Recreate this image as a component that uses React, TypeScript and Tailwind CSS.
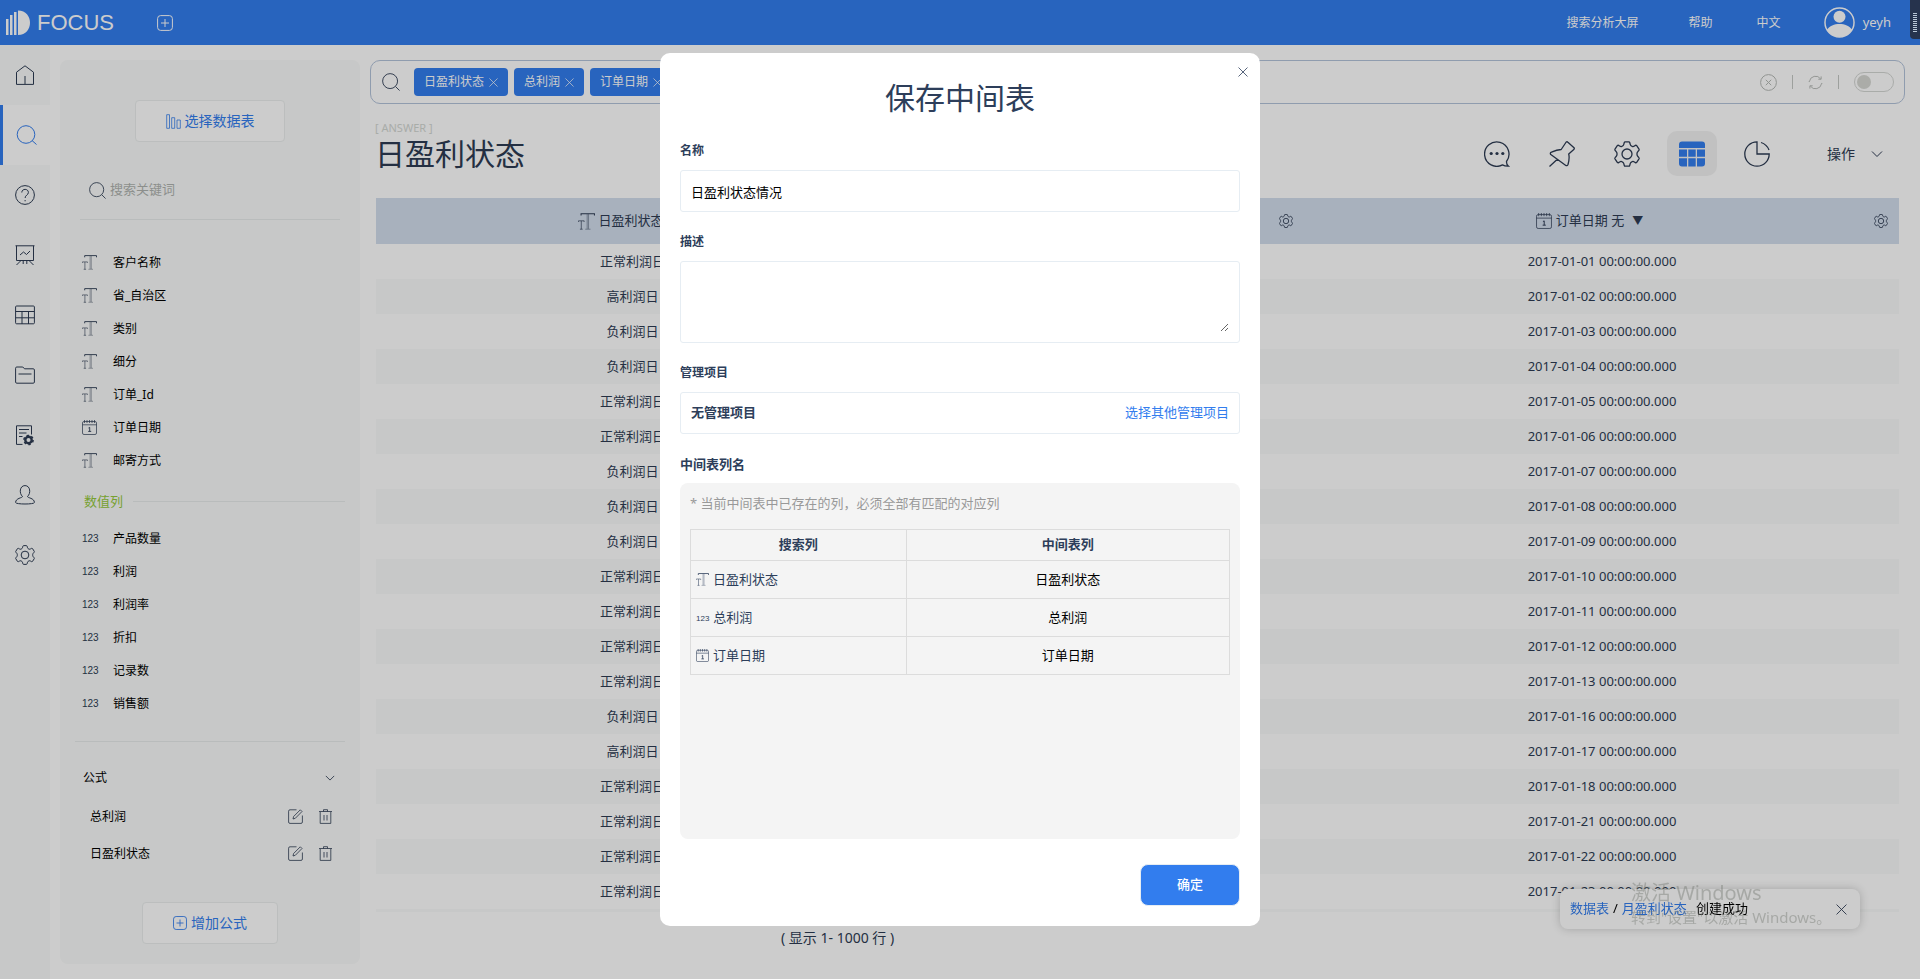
import type { ReactNode } from 'react';

type FieldType = 'text' | 'date' | 'number';

const textFields: { name: string; type: FieldType }[] = [
    { name: '客户名称', type: 'text' },
    { name: '省_自治区', type: 'text' },
    { name: '类别', type: 'text' },
    { name: '细分', type: 'text' },
    { name: '订单_Id', type: 'text' },
    { name: '订单日期', type: 'date' },
    { name: '邮寄方式', type: 'text' },
];

const numberFields = ['产品数量', '利润', '利润率', '折扣', '记录数', '销售额'];
const formulas = ['总利润', '日盈利状态'];
const keywords = ['日盈利状态', '总利润', '订单日期'];

const rows = [
    ['正常利润日', '2017-01-01'],
    ['高利润日', '2017-01-02'],
    ['负利润日', '2017-01-03'],
    ['负利润日', '2017-01-04'],
    ['正常利润日', '2017-01-05'],
    ['正常利润日', '2017-01-06'],
    ['负利润日', '2017-01-07'],
    ['负利润日', '2017-01-08'],
    ['负利润日', '2017-01-09'],
    ['正常利润日', '2017-01-10'],
    ['正常利润日', '2017-01-11'],
    ['正常利润日', '2017-01-12'],
    ['正常利润日', '2017-01-13'],
    ['负利润日', '2017-01-16'],
    ['高利润日', '2017-01-17'],
    ['正常利润日', '2017-01-18'],
    ['正常利润日', '2017-01-21'],
    ['正常利润日', '2017-01-22'],
    ['正常利润日', '2017-01-23'],
];

const mappedColumns: { name: string; type: FieldType }[] = [
    { name: '日盈利状态', type: 'text' },
    { name: '总利润', type: 'number' },
    { name: '订单日期', type: 'date' },
];

function Icon({ box = 20, className, children }: { box?: number; className: string; children: ReactNode }) {
    return (
        <svg viewBox={`0 0 ${box} ${box}`} className={`shrink-0 ${className}`} fill="none" stroke="currentColor" aria-hidden="true">
            {children}
        </svg>
    );
}

function SearchIcon({ className }: { className: string }) {
    return (
        <Icon className={className}>
            <circle cx="9" cy="9" r="8.3" />
            <path d="M15 15l4.5 4.5" />
        </Icon>
    );
}

function GearIcon({ className, strokeWidth = 1 }: { className: string; strokeWidth?: number }) {
    return (
        <Icon box={26} className={className}>
            <g strokeWidth={strokeWidth} strokeLinejoin="round">
                <path d="M9.7 3.6 10.3 1.5Q10.5.8 11.2.8H14.8Q15.5.8 15.7 1.5L16.3 3.6Q16.7 4.8 17.8 5.2L18.2 5.4Q19.4 5.8 20.4 5L21.4 4.4Q22.1 4 22.7 4.6L25 8.2Q25.4 8.9 24.9 9.4L23.9 10.5Q23 11.4 23 12.5V13.5Q23 14.6 23.9 15.5L24.9 16.6Q25.4 17.1 25 17.8L22.7 21.4Q22.1 22 21.4 21.6L20.4 21Q19.4 20.2 18.2 20.6L17.8 20.8Q16.7 21.2 16.3 22.4L15.7 24.5Q15.5 25.2 14.8 25.2H11.2Q10.5 25.2 10.3 24.5L9.7 22.4Q9.3 21.2 8.2 20.8L7.8 20.6Q6.6 20.2 5.6 21L4.6 21.6Q3.9 22 3.3 21.4L1 17.8Q.6 17.1 1.1 16.6L2.1 15.5Q3 14.6 3 13.5V12.5Q3 11.4 2.1 10.5L1.1 9.4Q.6 8.9 1 8.2L3.3 4.6Q3.9 4 4.6 4.4L5.6 5Q6.6 5.8 7.8 5.4L8.2 5.2Q9.3 4.8 9.7 3.6Z" />
                <circle cx="13" cy="13" r="5" />
            </g>
        </Icon>
    );
}

function CloseIcon({ className }: { className: string }) {
    return (
        <Icon box={10} className={className}>
            <path d="M.5.5l9 9M9.5.5l-9 9" strokeWidth=".8" />
        </Icon>
    );
}

function ChevronIcon({ className }: { className: string }) {
    return (
        <Icon box={12} className={className}>
            <path d="M1 3.5l5 5 5-5" />
        </Icon>
    );
}

function PlusSquareIcon({ className }: { className: string }) {
    return (
        <Icon box={16} className={className}>
            <rect x=".6" y=".6" width="14.8" height="14.8" rx="3" />
            <path d="M8 4v8M4 8h8" />
        </Icon>
    );
}

function FieldIcon({ type, className }: { type: FieldType; className: string }) {
    if (type === 'number') {
        return <span className="font-['Liberation_Sans'] leading-none">123</span>;
    }
    if (type === 'date') {
        return (
            <Icon box={15} className={className}>
                <rect x=".5" y="1.5" width="14" height="13" rx="1.5" strokeWidth=".7" />
                <path d="M.5 4.8h14M2.5 0v3M5 0v3M7.5 0v3M10 0v3M12.5 0v3" strokeWidth=".7" />
                <path d="M6.5 8l1.2-.6v4M6.2 11.4h3" strokeWidth=".9" />
            </Icon>
        );
    }
    return (
        <Icon box={15} className={className}>
            <path d="M2.7 2.3V.6h11.8v1.7" strokeWidth=".9" />
            <path d="M8.1 1v13M9.3 1v13M6.4 14.3h4.600" strokeWidth=".4" />
            <path d="M.4 7.900V6.900h5v1M2.900 7v7.200M1.700 14.300h2.400" strokeWidth=".6" />
        </Icon>
    );
}

const navItems = [
    {
        label: '首页',
        icon: <path d="M1.5 19.4V7.2L10 .8l8.5 6.4v12.2zM10 19V11" />,
    },
    {
        label: '搜索',
        active: true,
        icon: (
            <>
                <circle cx="10" cy="9.5" r="8.8" />
                <path d="M16 15.5l4.5 4" />
            </>
        ),
    },
    {
        label: '问答',
        icon: (
            <>
                <circle cx="10" cy="10" r="9.4" />
                <path d="M6.8 7.5c0-4.2 6.6-4.2 6.6 0 0 2.5-3.3 2.6-3.3 5.5M10.1 15v1.3" />
            </>
        ),
    },
    {
        label: '看板',
        icon: <path d="M.5.8h19M1.500.8v14.700h17V.8M5 10l3.500-3 3 2.500L15 6M6 15.500l-4.500 4.500M14 15.500l4.500 4.500M8.200 15.500V19M11.800 15.500V19" />,
    },
    {
        label: '数据',
        icon: (
            <>
                <rect x=".6" y="1" width="18.8" height="17.8" rx="1" />
                <path d="M.6 6.5h18.8M.6 12.8h18.8M7 6.5V19M13.5 6.5V19" />
            </>
        ),
    },
    {
        label: '资源',
        icon: <path d="M.6 17V3.2q0-1.2 1.2-1.2h6l1.700 1.800h8.700q1.200 0 1.200 1.200V17q0 1.200-1.200 1.200H1.800Q.6 18.200.6 17zM3.500 9h13" />,
    },
    {
        label: '任务',
        icon: (
            <>
                <path d="M7.5 19.4H1.5V.8h15v8.700M4 4.500h10M4 8h7.500M4 11.500h3.500" />
                <circle cx="13.5" cy="15" r="3.2" strokeWidth="2.4" />
                <circle cx="13.5" cy="15" r="4.6" strokeWidth="1.5" strokeDasharray="2.4 2.4" />
            </>
        ),
    },
    {
        label: '用户',
        icon: <path d="M7.5 11.5C4 8.500 4.500.6 10 .6s6 7.900 2.500 10.900c0 1.500 6.900 1.500 6.900 6 0 2-18.800 2-18.800 0 0-4.500 6.900-4.500 6.900-6z" />,
    },
];

function TopBar() {
    return (
        <header className="flex h-[45px] items-center bg-[#327dee] pr-[29px] text-xs text-white">
            <div className="flex items-center gap-[7px] pl-[6px]">
                <svg viewBox="0 0 24 26" className="h-[26px] w-6" fill="currentColor" aria-hidden="true">
                    <path d="M0 9h2.500v16H0zM4 5h2.500v20H4zM8 2h2.500v23H8zM12 .5c16 0 16 24.500 0 24.500z" />
                </svg>
                <span className="font-['Liberation_Sans'] text-[22px] leading-none">FOCUS</span>
            </div>
            <button type="button" className="ml-[43px]" aria-label="新建">
                <PlusSquareIcon className="h-4 w-4" />
            </button>
            <nav className="ml-auto flex items-center">
                <a href="#screen">搜索分析大屏</a>
                <a href="#help" className="ml-[50px]">帮助</a>
                <a href="#lang" className="ml-11">中文</a>
                <a href="#me" className="ml-[43px] flex items-center gap-2 text-[13px]">
                    <svg viewBox="0 0 32 32" className="h-[31px] w-[31px]" aria-hidden="true">
                        <circle cx="16" cy="16" r="15" fill="none" stroke="currentColor" strokeWidth="1.5" />
                        <circle cx="16" cy="10" r="6.2" fill="currentColor" />
                        <path d="M3 23.500c5-8 21-8 26 0a15 15 0 0 1-26 0z" fill="currentColor" />
                    </svg>
                    yeyh
                </a>
            </nav>
        </header>
    );
}

function SideNav() {
    return (
        <nav className="w-[50px] shrink-0 bg-[#f9fbfa] text-[#2d3b53]">
            {navItems.map((item) => (
                <a
                    key={item.label}
                    href="#nav"
                    aria-label={item.label}
                    className={`flex h-[60px] items-center justify-center ${item.active ? 'border-l-3 border-[#327dee] bg-white pr-[1px] text-[#327dee]' : ''}`}
                >
                    <Icon className="h-5 w-5 overflow-visible">{item.icon}</Icon>
                </a>
            ))}
            <a href="#settings" aria-label="设置" className="flex h-[60px] items-center justify-center">
                <GearIcon className="h-5 w-5" strokeWidth={1.3} />
            </a>
        </nav>
    );
}

function FieldRow({ name, type }: { name: string; type: FieldType }) {
    return (
        <li className="flex h-[33px] items-center text-xs text-black">
            <span className="w-[31px] shrink-0 text-[10px] text-[#2d3b53]">
                <FieldIcon type={type} className="h-[15px] w-[15px]" />
            </span>
            {name}
        </li>
    );
}

function FieldPanel() {
    return (
        <aside className="my-[15px] ml-[10px] flex w-[300px] shrink-0 flex-col self-start rounded-lg bg-[#f9fbfa] pt-10 pb-5">
            <button type="button" className="flex h-[42px] w-[150px] items-center justify-center gap-1 self-center rounded border border-[#ebeeee] bg-white text-sm text-[#327dee]">
                <Icon box={15} className="h-[15px] w-[15px]">
                    <path d="M.7.7h2.800v13.600H.7zM5.700 3.700h3v10.600h-3zM11 6h3.300v8.300H11z" strokeWidth=".8" />
                </Icon>
                选择数据表
            </button>
            <label className="mx-5 mt-[19px] flex h-[59px] items-center gap-1 border-b border-[#e8ebeb] pl-[9px] text-[#2d3b53]">
                <SearchIcon className="h-[17px] w-[17px]" />
                <input aria-label="搜索关键词" placeholder="搜索关键词" className="w-full text-[13px] outline-none placeholder:text-[#b0b3b0]" />
            </label>
            <ul className="mt-[26px] pl-[22px]">
                {textFields.map((field) => (
                    <FieldRow key={field.name} name={field.name} type={field.type} />
                ))}
            </ul>
            <div className="mr-[15px] ml-[24px] flex h-[45px] items-center gap-[10px] pt-1 text-[13px] text-[#95c93d]">
                数值列
                <span className="h-px flex-1 bg-[#e8ebeb]" />
            </div>
            <ul className="pl-[22px]">
                {numberFields.map((name) => (
                    <FieldRow key={name} name={name} type="number" />
                ))}
            </ul>
            <section className="mx-[15px] mt-[21px] border-t border-[#e8ebeb] pt-4 text-xs text-black">
                <h2 className="flex h-10 items-center justify-between pr-[10px] pl-2">
                    公式
                    <ChevronIcon className="h-[10px] w-[10px] text-[#2d3b53]" />
                </h2>
                {formulas.map((name) => (
                    <div key={name} className="flex h-[37px] items-center gap-[15px] pr-3 pl-[15px]">
                        <span className="flex-1">{name}</span>
                        <button type="button" aria-label={`编辑${name}`} className="text-[#2d3b53]">
                            <Icon box={15} className="h-[15px] w-[15px]">
                                <path d="M8.500.8H2Q.6.8.6 2.200V13q0 1.400 1.400 1.400h11q1.400 0 1.400-1.400V6.500M5 10l.6-2.500L12.300.8l1.700 1.700L7.300 9.300z" strokeWidth=".8" />
                            </Icon>
                        </button>
                        <button type="button" aria-label={`删除${name}`} className="text-[#2d3b53]">
                            <Icon box={15} className="h-[15px] w-[15px]">
                                <path d="M1 2.500h13M5.500 2.500V.7h4v1.800M2.200 3v11.400h10.600V3M6 6v5.500M9 6v5.500" strokeWidth=".8" />
                            </Icon>
                        </button>
                    </div>
                ))}
            </section>
            <button type="button" className="mt-[30px] flex h-[42px] w-[136px] items-center justify-center gap-1 self-center rounded border border-[#ebeeee] bg-white text-sm text-[#327dee]">
                <PlusSquareIcon className="h-[14px] w-[14px]" />
                增加公式
            </button>
        </aside>
    );
}

function SearchBar() {
    return (
        <div className="flex h-11 items-center rounded-[10px] border border-[#b3c3da] pr-[10px] pl-[11px] text-[#2d3b53]">
            <SearchIcon className="h-[18px] w-[18px]" />
            <div className="ml-[14px] flex gap-[6px]">
                {keywords.map((word) => (
                    <span key={word} className="flex h-7 items-center gap-[5px] rounded bg-[#327dee] px-[10px] text-xs text-white">
                        {word}
                        <button type="button" aria-label={`移除${word}`}>
                            <CloseIcon className="h-[9px] w-[9px]" />
                        </button>
                    </span>
                ))}
            </div>
            <div className="ml-auto flex items-center gap-[15px] text-[#b5b9b5]">
                <button type="button" aria-label="清空">
                    <Icon box={17} className="h-[17px] w-[17px]">
                        <circle cx="8.5" cy="8.5" r="7.9" />
                        <path d="M5.800 5.800l5.400 5.400M11.200 5.800l-5.400 5.400" />
                    </Icon>
                </button>
                <span className="h-[14px] w-px bg-[#c5c8c5]" />
                <button type="button" aria-label="刷新">
                    <Icon box={16} className="h-[15px] w-[15px]">
                        <path d="M1.500 7a6.600 6.600 0 0 1 12-2.800M14.500 9a6.600 6.600 0 0 1-12 2.800M14 1.500v3h-3M2 14.500v-3h3M1.300 7.500v-1M14.700 8.500v1" />
                    </Icon>
                </button>
                <span className="h-[14px] w-px bg-[#c5c8c5]" />
                <input
                    type="checkbox"
                    aria-label="自动搜索"
                    className="h-5 w-10 appearance-none rounded-full border border-[#d4d7d4] before:mt-[2px] before:ml-[2px] before:block before:h-[14px] before:w-[14px] before:rounded-full before:bg-[#d6d8d3]"
                />
            </div>
        </div>
    );
}

function ToolBar() {
    const tool = 'flex h-[45px] w-[50px] items-center justify-center rounded-[10px]';
    return (
        <div className="mt-[27px] flex items-center gap-[15px] pr-[22px] text-[#2d3b53]">
            <button type="button" aria-label="评论" className={tool}>
                <Icon box={26} className="h-[26px] w-[26px]">
                    <path d="M22.500 20.500a12.200 12.200 0 1 0-4 3.400q2.500 1.500 6 1.300-2.200-1.700-2-4.700z" strokeWidth="1.3" />
                    <g fill="currentColor" stroke="none">
                        <circle cx="7.2" cy="12.5" r="1.6" />
                        <circle cx="13" cy="12.5" r="1.6" />
                        <circle cx="18.8" cy="12.5" r="1.6" />
                    </g>
                </Icon>
            </button>
            <button type="button" aria-label="固定" className={tool}>
                <Icon box={26} className="h-[26px] w-[26px]">
                    <path d="M17.200 1q.9-.6 1.700.2L25 6.700q.7.900-.2 1.700L19.700 13q1.100 4.300-.7 10.500-.8 2-2.500.7L1.800 13.500q-1.200-1.500.7-2.300Q8 8.500 12.200 8.500zM8.300 18.300L.5 25.500" strokeWidth="1.3" strokeLinejoin="round" />
                </Icon>
            </button>
            <button type="button" aria-label="配置" className={tool}>
                <GearIcon className="h-[26px] w-[26px]" strokeWidth={1.3} />
            </button>
            <button type="button" aria-label="表格" className={`${tool} bg-[#f2f2f2] text-[#327dee]`}>
                <svg viewBox="0 0 26 26" className="h-[26px] w-[26px]" fill="currentColor" aria-hidden="true">
                    <path d="M0 7V3.500Q0 .5 3 .5h20q3 0 3 3V7zM0 8.500h8v7.200H0zM9.300 8.500h7.400v7.200H9.300zM18 8.500h8v7.200h-8zM0 17.200h8v8.300H3q-3 0-3-3zM9.300 17.200h7.400v8.300H9.300zM18 17.200h8v5.300q0 3-3 3h-5z" />
                </svg>
            </button>
            <button type="button" aria-label="图表" className={tool}>
                <Icon box={26} className="h-[26px] w-[26px]">
                    <path d="M13 .8v12.200h12.200A12.200 12.200 0 1 1 13 .8zM17 1.500a12.500 12.500 0 0 1 8 7.500" strokeWidth="1.3" />
                </Icon>
            </button>
            <button type="button" className="ml-[30px] flex items-center gap-4 text-sm">
                操作
                <ChevronIcon className="h-3 w-3" />
            </button>
        </div>
    );
}

function ResultTable() {
    return (
        <table className="w-full table-fixed text-center text-[13px] text-[#2d3b53]">
            <colgroup>
                <col className="w-[33.7%]" />
                <col className="w-[27.3%]" />
                <col className="w-[39%]" />
            </colgroup>
            <thead>
                <tr className="h-[46px] bg-[#d3deed]">
                    <th scope="col" className="font-normal">
                        <div className="flex items-center justify-center gap-1 pr-6">
                            <FieldIcon type="text" className="h-[17px] w-[17px]" />
                            日盈利状态
                        </div>
                    </th>
                    <th scope="col" className="pr-3 font-normal">
                        <button type="button" aria-label="列设置" className="float-right">
                            <GearIcon className="h-[14px] w-[14px]" strokeWidth={1.6} />
                        </button>
                    </th>
                    <th scope="col" className="pr-[11px] font-normal">
                        <div className="flex items-center">
                            <span className="flex flex-1 items-center justify-center gap-1">
                                <FieldIcon type="date" className="h-4 w-4" />
                                订单日期 无
                                <span className="pl-1 text-[11px]">▼</span>
                            </span>
                            <button type="button" aria-label="列设置">
                                <GearIcon className="h-[14px] w-[14px]" strokeWidth={1.6} />
                            </button>
                        </div>
                    </th>
                </tr>
            </thead>
            <tbody>
                {rows.map(([status, date]) => (
                    <tr key={date} className="h-[35px] even:bg-[#f9fbfa]">
                        <td>{status}</td>
                        <td />
                        <td>{date} 00:00:00.000</td>
                    </tr>
                ))}
            </tbody>
        </table>
    );
}

function Toast() {
    return (
        <div role="status" className="fixed right-[60px] bottom-[50px] flex h-10 w-[300px] items-center rounded-lg bg-white px-[10px] text-[13px] text-black shadow-[0_0_10px_rgba(0,0,0,0.2)]">
            <a href="#tables" className="text-[#327dee]">数据表</a>
            <span className="px-1">/</span>
            <a href="#table" className="text-[#327dee]">月盈利状态</a>
            <span className="ml-[9px]">创建成功</span>
            <button type="button" aria-label="关闭提示" className="mr-[3px] ml-auto text-[#2d3b53]">
                <CloseIcon className="h-[11px] w-[11px]" />
            </button>
        </div>
    );
}

function SaveDialog() {
    const label = 'mb-[10px] block leading-[18px] font-bold';
    const box = 'h-[42px] w-full rounded-[3px] border border-[#e6edf3] px-[10px] text-[13px]';
    return (
        <div className="fixed inset-0 flex items-center justify-center bg-black/20">
            <div role="dialog" aria-labelledby="dialog-title" className="relative w-[600px] rounded-[10px] bg-white px-5 pt-[22px] pb-5 text-[#2d3e5a]">
                <button type="button" aria-label="关闭" className="absolute top-[14px] right-3">
                    <CloseIcon className="h-[10px] w-[10px]" />
                </button>
                <h1 id="dialog-title" className="mb-[22px] text-center text-3xl leading-[45px]">保存中间表</h1>
                <div className="flex flex-col gap-[21px]">
                    <div>
                        <label htmlFor="name" className={`${label} text-xs`}>名称</label>
                        <input id="name" defaultValue="日盈利状态情况" className={`${box} text-black`} />
                    </div>
                    <div>
                        <label htmlFor="desc" className={`${label} text-xs`}>描述</label>
                        <div className="flex h-[82px] rounded-[3px] border border-[#e6edf3] p-[10px]">
                            <textarea id="desc" className="w-full resize text-[13px] text-black outline-none" />
                        </div>
                    </div>
                    <div>
                        <h2 className={`${label} text-xs`}>管理项目</h2>
                        <div className={`${box} flex items-center justify-between`}>
                            <span className="font-bold">无管理项目</span>
                            <a href="#project" className="text-[#327dee]">选择其他管理项目</a>
                        </div>
                    </div>
                    <div>
                        <h2 className={`${label} text-[13px]`}>中间表列名</h2>
                        <div className="min-h-[356px] rounded-lg bg-[#f4f4f4] p-[10px] text-[13px]">
                            <p className="mb-4 leading-5 text-[#999999]">* 当前中间表中已存在的列，必须全部有匹配的对应列</p>
                            <table className="w-full table-fixed border-collapse">
                                <thead>
                                    <tr className="h-[31px]">
                                        <th scope="col" className="w-2/5 border border-[#dcdcdc] font-bold">搜索列</th>
                                        <th scope="col" className="border border-[#dcdcdc] font-bold">中间表列</th>
                                    </tr>
                                </thead>
                                <tbody>
                                    {mappedColumns.map((col) => (
                                        <tr key={col.name} className="h-[38px]">
                                            <td className="border border-[#dcdcdc] px-[5px]">
                                                <div className="flex items-center gap-1">
                                                    <span className="text-[8px]">
                                                        <FieldIcon type={col.type} className="h-[13px] w-[13px]" />
                                                    </span>
                                                    {col.name}
                                                </div>
                                            </td>
                                            <td className="border border-[#dcdcdc] text-center text-black">{col.name}</td>
                                        </tr>
                                    ))}
                                </tbody>
                            </table>
                        </div>
                    </div>
                </div>
                <button type="button" className="mt-[25px] ml-auto block h-[42px] w-[100px] rounded-lg border border-[#e6edf3] bg-[#327dee] text-[13px] font-medium text-white">
                    确定
                </button>
            </div>
        </div>
    );
}

export default function App() {
    return (
        <div className="flex min-h-screen flex-col bg-white font-['Noto_Sans','Noto_Sans_CJK_SC',sans-serif]">
            <TopBar />
            <div className="flex flex-1">
                <SideNav />
                <FieldPanel />
                <main className="min-w-0 flex-1 pt-[15px] pr-[15px] pl-[10px] text-[#2d3b53]">
                    <SearchBar />
                    <div className="flex items-start justify-between">
                        <div className="pt-4 pl-[5px]">
                            <div className="text-[11px] leading-4 text-[#d3d7d3]">[ ANSWER ]</div>
                            <h1 className="text-3xl leading-9">日盈利状态</h1>
                        </div>
                        <ToolBar />
                    </div>
                    <div className="mx-[6px] mt-[22px] border-b-3 border-[#f9fbfa]">
                        <ResultTable />
                    </div>
                    <p className="mt-4 pl-[411px] text-sm">( 显示 1- 1000 行 )</p>
                </main>
            </div>
            <Toast />
            <SaveDialog />
            {/* system overlays */}
            <div className="fixed top-0 right-0 flex h-[39px] w-[10px] flex-col items-center justify-end gap-px rounded-bl bg-[#26334d] pb-[7px]">
                {Array.from({ length: 10 }, (_, i) => (
                    <span key={i} className="h-px w-1 bg-[#b9c7d6]" />
                ))}
            </div>
            <div className="pointer-events-none fixed right-[85px] bottom-[50px] w-[204px] text-[#6f736c]/40">
                <div className="text-xl leading-6">激活 Windows</div>
                <div className="text-[15px] leading-6 whitespace-nowrap">转到"设置"以激活 Windows。</div>
            </div>
        </div>
    );
}
